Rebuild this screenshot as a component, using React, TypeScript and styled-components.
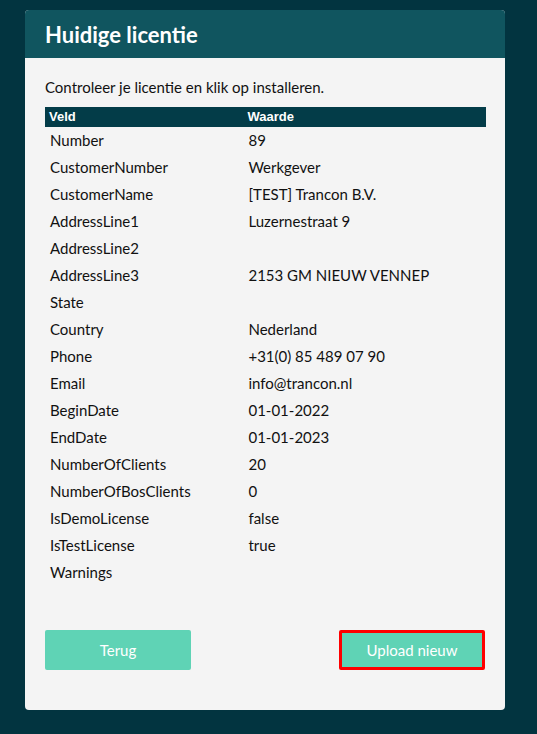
import React from 'react';
import styled, { createGlobalStyle } from 'styled-components';

const GlobalStyle = createGlobalStyle`
  html, body {
    margin: 0;
    padding: 0;
    background: #023440;
  }
  body {
    font-family: Lato, 'Open Sans', sans-serif;
  }
`;

const Page = styled.div`
  min-height: 734px;
  padding: 10px 32px 24px 25px;
  box-sizing: border-box;
`;

const Card = styled.section`
  width: 480px;
  background: #f4f4f4;
  border-radius: 4px;
  overflow: hidden;
`;

const CardHeader = styled.header`
  height: 48px;
  background: #10555f;
  display: flex;
  align-items: center;
  padding: 0 20px;
`;

const Title = styled.h1`
  margin: 0;
  color: #fff;
  font-size: 22px;
  font-weight: 700;
`;

const CardBody = styled.div`
  padding: 20px 20px 40px;
`;

const Intro = styled.p`
  margin: 0 0 10px;
  font-size: 15px;
  line-height: 19px;
  color: #111;
`;

const Table = styled.table`
  width: 441px;
  border-collapse: collapse;
  font-size: 15px;
  color: #111;
`;

const HeadCell = styled.th<{ $wide?: boolean }>`
  background: #033c48;
  color: #fff;
  text-align: left;
  font-family: 'Liberation Sans', Arial, sans-serif;
  font-weight: 700;
  font-size: 13px;
  line-height: 20px;
  height: 20px;
  padding: 0 4px;
  width: ${(p) => (p.$wide ? '45%' : 'auto')};
`;

const Cell = styled.td`
  height: 27px;
  line-height: 27px;
  padding: 0 5px;
  vertical-align: middle;
`;

const Actions = styled.div`
  display: flex;
  justify-content: space-between;
  margin-top: 44px;
`;

const Button = styled.button<{ $focused?: boolean }>`
  width: 146px;
  height: 40px;
  border: ${(p) => (p.$focused ? '3px solid #ff0000' : '2px solid transparent')};
  border-radius: 2px;
  background: #5fd3b5;
  color: #fff;
  font-family: Lato, 'Open Sans', sans-serif;
  font-size: 15px;
  cursor: pointer;
`;

const rows: [string, string][] = [
  ['Number', '89'],
  ['CustomerNumber', 'Werkgever'],
  ['CustomerName', '[TEST] Trancon B.V.'],
  ['AddressLine1', 'Luzernestraat 9'],
  ['AddressLine2', ''],
  ['AddressLine3', '2153 GM NIEUW VENNEP'],
  ['State', ''],
  ['Country', 'Nederland'],
  ['Phone', '+31(0) 85 489 07 90'],
  ['Email', 'info@trancon.nl'],
  ['BeginDate', '01-01-2022'],
  ['EndDate', '01-01-2023'],
  ['NumberOfClients', '20'],
  ['NumberOfBosClients', '0'],
  ['IsDemoLicense', 'false'],
  ['IsTestLicense', 'true'],
  ['Warnings', ''],
];

export default function App() {
  return (
    <>
      <GlobalStyle />
      <Page>
        <Card>
          <CardHeader>
            <Title>Huidige licentie</Title>
          </CardHeader>
          <CardBody>
            <Intro>Controleer je licentie en klik op installeren.</Intro>
            <Table>
              <thead>
                <tr>
                  <HeadCell $wide>Veld</HeadCell>
                  <HeadCell>Waarde</HeadCell>
                </tr>
              </thead>
              <tbody>
                {rows.map(([field, value]) => (
                  <tr key={field}>
                    <Cell>{field}</Cell>
                    <Cell>{value}</Cell>
                  </tr>
                ))}
              </tbody>
            </Table>
            <Actions>
              <Button>Terug</Button>
              <Button $focused>Upload nieuw</Button>
            </Actions>
          </CardBody>
        </Card>
      </Page>
    </>
  );
}
